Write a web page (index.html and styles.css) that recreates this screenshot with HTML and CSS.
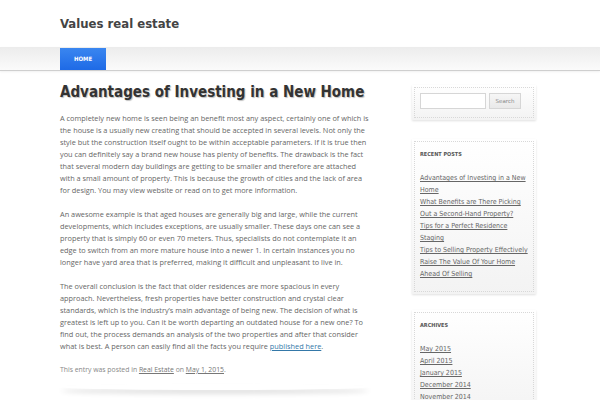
FILE: index.html
```html
<!DOCTYPE html>
<html>
<head>
<meta charset="utf-8">
<link rel="stylesheet" href="styles.css">
</head>
<body>
<header class="site-header">
  <div class="wrap"><h1 class="site-title">Values real estate</h1></div>
</header>
<nav class="nav">
  <div class="wrap"><a class="nav-item active">HOME</a></div>
</nav>
<div class="wrap main">
  <article class="post">
    <h2 class="post-title">Advantages of Investing in a New Home</h2>
    <p>A completely new home is seen being an benefit most any aspect, certainly one of which is the house is a usually new creating that should be accepted in several levels. Not only the style but the construction itself ought to be within acceptable parameters. If it is true then you can definitely say a brand new house has plenty of benefits. The drawback is the fact that several modern day buildings are getting to be smaller and therefore are attached with a small amount of property. This is because the growth of cities and the lack of area for design. You may view website or read on to get more information.</p>
    <p>An awesome example is that aged houses are generally big and large, while the current developments, which includes exceptions, are usually smaller. These days one can see a property that is simply 60 or even 70 meters. Thus, specialists do not contemplate it an edge to switch from an more mature house into a newer 1. In certain instances you no longer have yard area that is preferred, making it difficult and unpleasant to live in.</p>
    <p>The overall conclusion is the fact that older residences are more spacious in every approach. Nevertheless, fresh properties have better construction and crystal clear standards, which is the industry’s main advantage of being new. The decision of what is greatest is left up to you. Can it be worth departing an outdated house for a new one? To find out, the process demands an analysis of the two properties and after that consider what is best. A person can easily find all the facts you require <a class="link">published here</a>.</p>
    <div class="meta">This entry was posted in <a>Real Estate</a> on <a>May 1, 2015</a>.</div>
    <div class="divider"></div>
  </article>
  <aside class="sidebar">
    <div class="widget search-widget">
      <div class="inner search-row">
        <span class="input"></span>
        <span class="btn">Search</span>
      </div>
    </div>
    <div class="widget">
      <div class="inner">
        <h3 class="widget-title">RECENT POSTS</h3>
        <ul>
          <li><a>Advantages of Investing in a New Home</a></li>
          <li><a>What Benefits are There Picking Out a Second-Hand Property?</a></li>
          <li><a>Tips for a Perfect Residence Staging</a></li>
          <li><a>Tips to Selling Property Effectively</a></li>
          <li><a>Raise The Value Of Your Home Ahead Of Selling</a></li>
        </ul>
      </div>
    </div>
    <div class="widget">
      <div class="inner">
        <h3 class="widget-title">ARCHIVES</h3>
        <ul>
          <li><a>May 2015</a></li>
          <li><a>April 2015</a></li>
          <li><a>January 2015</a></li>
          <li><a>December 2014</a></li>
          <li><a>November 2014</a></li>
        </ul>
      </div>
    </div>
  </aside>
</div>
</body>
</html>
```
FILE: styles.css
```css
html, body { margin: 0; padding: 0; background: #fff; }
body { font-family: "Open Sans", sans-serif; color: #666; overflow: hidden; height: 400px; }
.wrap { width: 480px; margin: 0 auto; }
.site-header { height: 47px; }
.site-title { margin: 0; padding-top: 16px; font: bold 13px "DejaVu Sans Condensed", "DejaVu Sans", sans-serif; font-stretch: condensed; color: #444; }
.nav { height: 23px; background: linear-gradient(#ececec, #fbfbfb); border-bottom: 1px solid #cfcfcf; box-shadow: 0 1px 2px rgba(0,0,0,0.06); }
.nav .wrap { display: flex; }
.nav-item { display: block; width: 46px; height: 22px; margin-top: 1px; text-align: center; font: bold 6px/22px "DejaVu Sans Condensed", "DejaVu Sans", sans-serif; font-stretch: condensed; color: #fff; background: linear-gradient(#3a86f0, #1e6ae6); }
.main { display: flex; justify-content: space-between; }
.post { width: 310px; }
.post-title { margin: 12px 0 0; font: bold 15px "DejaVu Sans Condensed", "DejaVu Sans", sans-serif; font-stretch: condensed; color: #333; text-shadow: 1px 1px 1px rgba(0,0,0,0.25); }
.post p { margin: 11px 0 0; font-size: 7.35px; line-height: 12px; }
.post p + p { margin-top: 12px; }
.link { color: #3478a8; text-decoration: underline; }
.meta { margin-top: 13px; font-size: 6.85px; color: #888; }
.meta a { text-decoration: underline; color: #777; }
.divider { margin-top: 10px; height: 6px; border-radius: 50%; box-shadow: 0 4px 5px rgba(0,0,0,0.12); }
.sidebar { width: 124px; margin-right: 4px; padding-top: 14px; }
.widget { background: linear-gradient(#fff, #f3f3f3); padding: 2px; box-shadow: 0 1px 2px rgba(0,0,0,0.12); margin-bottom: 16px; }
.search-widget { margin-bottom: 19px; }
.widget .inner { border: 1px dotted #d8d8d8; padding: 6px 2px 11px 5px; }
.search-row { display: flex; align-items: center; gap: 3px; padding: 5px 5px 8px !important; }
.input { width: 64px; height: 14px; border: 1px solid #d6d6d6; background: #fff; }
.btn { width: 30px; height: 14px; border: 1px solid #d6d6d6; background: linear-gradient(#f6f6f6, #e9e9e9); font: 5.5px/14px "DejaVu Sans", sans-serif; color: #888; text-align: center; }
.widget-title { margin: 3px 0 0; font: bold 5.5px "DejaVu Sans Condensed", "DejaVu Sans", sans-serif; font-stretch: condensed; color: #555; }
.widget ul { list-style: none; margin: 15px 0 0; padding: 0; }
.widget li { font: 7px/12px "DejaVu Sans Condensed", "DejaVu Sans", sans-serif; font-stretch: condensed; }
.widget li a { color: #666; text-decoration: underline; }
```
